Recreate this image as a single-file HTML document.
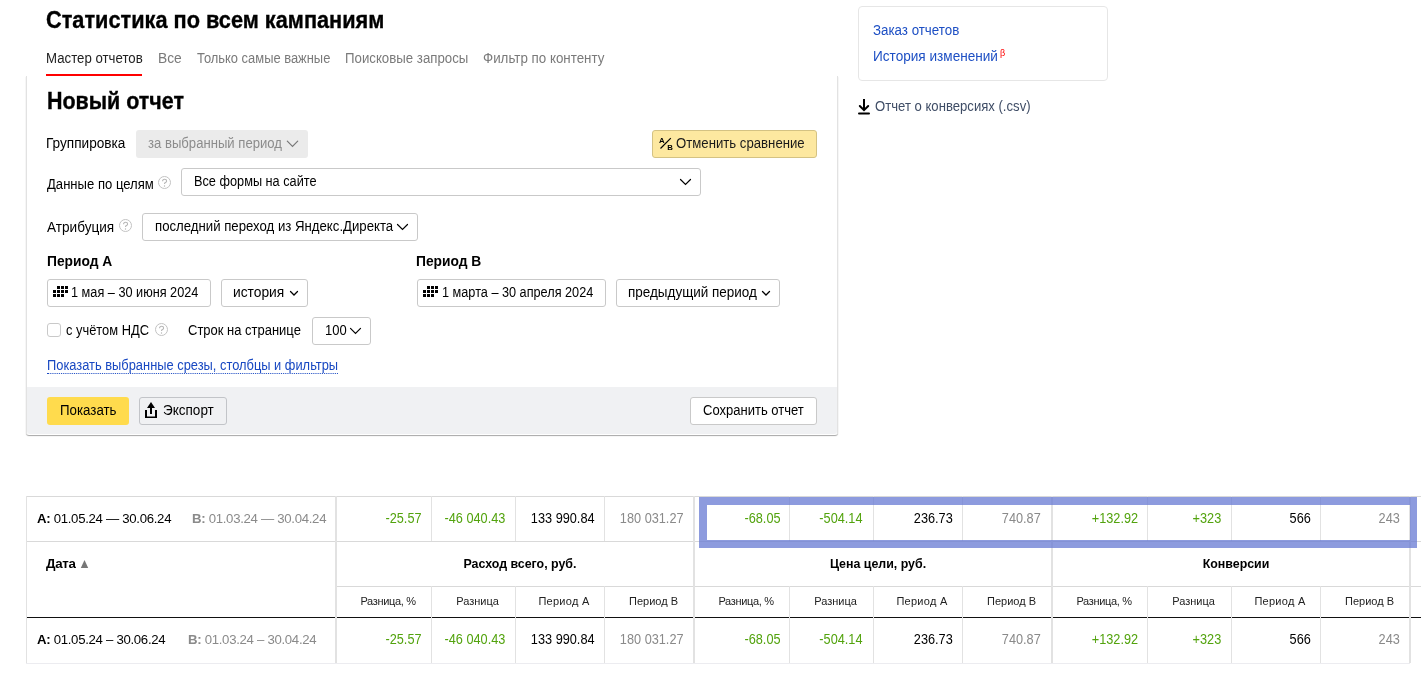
<!DOCTYPE html>
<html><head><meta charset="utf-8">
<style>
*{margin:0;padding:0;box-sizing:border-box}
html,body{width:1421px;height:687px;overflow:hidden;background:#fff}
body{font-family:"Liberation Sans",sans-serif;color:#000;font-size:13.8px;position:relative}
.a{position:absolute;white-space:nowrap}
.t{line-height:1}
.btn{position:absolute;border:1px solid #c9c9c9;border-radius:3px;background:#fff}
.q{position:absolute;width:13px;height:13px;border:1px solid #c4c4c4;border-radius:50%;color:#b0b0b0;font-size:9px;line-height:11px;text-align:center}
.chev{position:absolute}
.vl{position:absolute;width:1px;background:#e3e3e3}
.hl{position:absolute;height:1px;background:#e3e3e3}
.num{position:absolute;text-align:right;white-space:nowrap;font-size:14.3px;line-height:1;transform:scaleX(0.89);transform-origin:100% 0}
.g{color:#52a30d}
.gr{color:#8a8a8a}
.sh{position:absolute;text-align:right;white-space:nowrap;font-size:11px;line-height:1;color:#222}
</style></head><body>
<div id="wrap" style="position:absolute;left:0;top:0;width:1421px;height:687px;will-change:transform">

<!-- Title -->
<div class="a t" style="left:46px;top:9px;font-size:23.5px;font-weight:700;color:#000;transform-origin:0 0;transform:scaleX(0.925);-webkit-text-stroke:0.35px #000">Статистика по всем кампаниям</div>

<!-- Tabs -->
<div class="a t" style="left:46px;top:52px;font-size:13.8px;color:#222;transform-origin:0 0;transform:scaleX(0.9592)">Мастер отчетов</div>
<div class="a t" style="left:158px;top:52px;font-size:13.8px;color:#7a7a7a;transform-origin:0 0;transform:scaleX(1.0000)">Все</div>
<div class="a t" style="left:197px;top:52px;font-size:13.8px;color:#7a7a7a;transform-origin:0 0;transform:scaleX(0.9362)">Только самые важные</div>
<div class="a t" style="left:345px;top:52px;font-size:13.8px;color:#7a7a7a;transform-origin:0 0;transform:scaleX(0.9604)">Поисковые запросы</div>
<div class="a t" style="left:483px;top:52px;font-size:13.8px;color:#7a7a7a;transform-origin:0 0;transform:scaleX(0.9675)">Фильтр по контенту</div>
<div class="a" style="left:46px;top:74px;width:96px;height:2px;background:#f00"></div>

<!-- Panel -->
<div class="a" style="left:26px;top:76px;width:812px;height:359px;border-left:1px solid #e2e2e2;border-right:1px solid #e2e2e2;border-radius:0 0 3px 3px;box-shadow:0 1px 1px rgba(0,0,0,.35)"></div>
<div class="a" style="left:27px;top:387px;width:810px;height:47px;background:#f0f1f3;border-radius:0 0 3px 3px"></div>

<div class="a t" style="left:47px;top:90px;font-size:23.5px;font-weight:700;color:#000;transform-origin:0 0;transform:scaleX(0.913);-webkit-text-stroke:0.35px #000">Новый отчет</div>

<!-- Группировка -->
<div class="a t" style="left:46px;top:137px;font-size:13.8px;transform-origin:0 0;transform:scaleX(0.9873)">Группировка</div>
<div class="a" style="left:136px;top:130px;width:172px;height:28px;background:#ebebeb;border-radius:3px"></div>
<div class="a t" style="left:148px;top:137px;font-size:13.8px;color:#8c8c8c;transform-origin:0 0;transform:scaleX(0.9506)">за выбранный период</div>

<!-- Отменить сравнение -->
<div class="a" style="left:652px;top:130px;width:165px;height:28px;background:#fde8a0;border:1px solid #d4c283;border-radius:3px"></div>
<div class="a t" style="left:676px;top:137px;font-size:13.8px;color:#1a1a1a;transform-origin:0 0;transform:scaleX(0.9549)">Отменить сравнение</div>

<!-- Данные по целям -->
<div class="a t" style="left:47px;top:178px;font-size:13.8px;transform-origin:0 0;transform:scaleX(0.9482)">Данные по целям</div>
<svg class="a" style="left:158px;top:176px" width="14" height="14"><circle cx="6.5" cy="6.5" r="6" stroke="#c2c2c2" stroke-width="1" fill="none"/><path d="M4.6 5.2 Q4.6 3.2 6.6 3.2 Q8.6 3.2 8.6 4.9 Q8.6 6 7.4 6.6 Q6.5 7.1 6.5 8.1" stroke="#b5b5b5" stroke-width="1.1" fill="none"/><circle cx="6.5" cy="10" r="0.7" fill="#b5b5b5"/></svg>
<div class="btn" style="left:181px;top:168px;width:520px;height:28px"></div>
<div class="a t" style="left:194px;top:175px;font-size:13.8px;transform-origin:0 0;transform:scaleX(0.9231)">Все формы на сайте</div>

<!-- Атрибуция -->
<div class="a t" style="left:47px;top:221px;font-size:13.8px;transform-origin:0 0;transform:scaleX(0.9854)">Атрибуция</div>
<svg class="a" style="left:119px;top:219px" width="14" height="14"><circle cx="6.5" cy="6.5" r="6" stroke="#c2c2c2" stroke-width="1" fill="none"/><path d="M4.6 5.2 Q4.6 3.2 6.6 3.2 Q8.6 3.2 8.6 4.9 Q8.6 6 7.4 6.6 Q6.5 7.1 6.5 8.1" stroke="#b5b5b5" stroke-width="1.1" fill="none"/><circle cx="6.5" cy="10" r="0.7" fill="#b5b5b5"/></svg>
<div class="btn" style="left:142px;top:213px;width:276px;height:28px"></div>
<div class="a t" style="left:155px;top:220px;font-size:13.8px;transform-origin:0 0;transform:scaleX(0.9562)">последний переход из Яндекс.Директа</div>

<!-- Periods -->
<div class="a t" style="left:47px;top:255px;font-size:13.8px;font-weight:700;color:#000;transform-origin:0 0;transform:scaleX(1.0000)">Период А</div>
<div class="a t" style="left:416px;top:255px;font-size:13.8px;font-weight:700;color:#000;transform-origin:0 0;transform:scaleX(1.0000)">Период В</div>

<div class="btn" style="left:47px;top:279px;width:164px;height:28px"></div>
<div class="a t" style="left:71px;top:286px;font-size:13.8px;transform-origin:0 0;transform:scaleX(0.9205)">1 мая – 30 июня 2024</div>
<div class="btn" style="left:221px;top:279px;width:87px;height:28px"></div>
<div class="a t" style="left:233px;top:286px;font-size:13.8px;transform-origin:0 0;transform:scaleX(1.0000)">история</div>

<div class="btn" style="left:417px;top:279px;width:189px;height:28px"></div>
<div class="a t" style="left:442px;top:286px;font-size:13.8px;transform-origin:0 0;transform:scaleX(0.9198)">1 марта – 30 апреля 2024</div>
<div class="btn" style="left:616px;top:279px;width:164px;height:28px"></div>
<div class="a t" style="left:628px;top:286px;font-size:13.8px;transform-origin:0 0;transform:scaleX(0.9769)">предыдущий период</div>

<!-- НДС -->
<div class="a" style="left:47px;top:323px;width:14px;height:14px;border:1px solid #c9c9c9;border-radius:3px"></div>
<div class="a t" style="left:66px;top:324px;font-size:13.8px;transform-origin:0 0;transform:scaleX(0.9339)">с учётом НДС</div>
<svg class="a" style="left:155px;top:323px" width="14" height="14"><circle cx="6.5" cy="6.5" r="6" stroke="#c2c2c2" stroke-width="1" fill="none"/><path d="M4.6 5.2 Q4.6 3.2 6.6 3.2 Q8.6 3.2 8.6 4.9 Q8.6 6 7.4 6.6 Q6.5 7.1 6.5 8.1" stroke="#b5b5b5" stroke-width="1.1" fill="none"/><circle cx="6.5" cy="10" r="0.7" fill="#b5b5b5"/></svg>
<div class="a t" style="left:188px;top:324px;font-size:13.8px;transform-origin:0 0;transform:scaleX(0.9412)">Строк на странице</div>
<div class="btn" style="left:312px;top:317px;width:59px;height:28px"></div>
<div class="a t" style="left:325px;top:324px;font-size:13.8px;transform-origin:0 0;transform:scaleX(0.9401)">100</div>

<!-- link -->
<div class="a t" style="left:47px;top:359px;font-size:13.8px;color:#1848c2;border-bottom:1px dotted #1848c2;padding-bottom:0px;transform-origin:0 0;transform:scaleX(0.9325)">Показать выбранные срезы, столбцы и фильтры</div>

<!-- footer buttons -->
<div class="a" style="left:47px;top:397px;width:82px;height:28px;background:#ffdb4d;border-radius:3px"></div>
<div class="a t" style="left:60px;top:404px;font-size:13.8px;transform-origin:0 0;transform:scaleX(0.9643)">Показать</div>
<div class="a" style="left:139px;top:397px;width:88px;height:28px;border:1px solid #c2c4c8;border-radius:3px"></div>
<div class="a t" style="left:163px;top:404px;font-size:13.8px;transform-origin:0 0;transform:scaleX(0.9800)">Экспорт</div>
<div class="btn" style="left:690px;top:397px;width:127px;height:28px"></div>
<div class="a t" style="left:703px;top:404px;font-size:13.8px;transform-origin:0 0;transform:scaleX(0.9434)">Сохранить отчет</div>

<!-- Right box -->
<div class="a" style="left:858px;top:6px;width:250px;height:75px;border:1px solid #e6e6e6;border-radius:4px"></div>
<div class="a t" style="left:873px;top:24px;font-size:13.8px;color:#1d4fc4;transform-origin:0 0;transform:scaleX(0.9655)">Заказ отчетов</div>
<div class="a t" style="left:873px;top:50px;font-size:13.8px;color:#1d4fc4;transform-origin:0 0;transform:scaleX(0.9848)">История изменений</div>
<div class="a t" style="left:1000px;top:49px;font-size:9px;color:#f00">β</div>
<div class="a t" style="left:875px;top:100px;font-size:13.8px;color:#3f4d66;transform-origin:0 0;transform:scaleX(0.9506)">Отчет о конверсиях (.csv)</div>


<!-- ICONS -->
<svg class="a" style="left:0;top:0" width="1421" height="460" viewBox="0 0 1421 460">
 <g fill="none" stroke="#000" stroke-width="1.2" stroke-linecap="round" stroke-linejoin="miter">
  <path d="M287.3 141.2 L292.5 146.4 L297.7 141.2" stroke="#777"/>
  <path d="M680.5 179.5 L685.5 184.5 L690.5 179.5"/>
  <path d="M397.5 224.5 L402.5 229.5 L407.5 224.5"/>
  <path d="M290.5 291.5 L294 295 L297.5 291.5" stroke-width="1.25"/>
  <path d="M762.5 291.5 L766 295 L769.5 291.5" stroke-width="1.25"/>
  <path d="M350.5 328.3 L355.5 333.3 L360.5 328.3"/>
 </g>
 <g fill="#000">
  <rect x="57" y="286" width="3" height="3"/><rect x="61" y="286" width="3" height="3"/><rect x="65" y="286" width="3" height="3"/>
  <rect x="53" y="290" width="3" height="3"/><rect x="57" y="290" width="3" height="3"/><rect x="61" y="290" width="3" height="3"/><rect x="65" y="290" width="3" height="3"/>
  <rect x="53" y="294" width="3" height="3"/><rect x="57" y="294" width="3" height="3"/><rect x="61" y="294" width="3" height="3"/>
  <rect x="427" y="286" width="3" height="3"/><rect x="431" y="286" width="3" height="3"/><rect x="435" y="286" width="3" height="3"/>
  <rect x="423" y="290" width="3" height="3"/><rect x="427" y="290" width="3" height="3"/><rect x="431" y="290" width="3" height="3"/><rect x="435" y="290" width="3" height="3"/>
  <rect x="423" y="294" width="3" height="3"/><rect x="427" y="294" width="3" height="3"/><rect x="431" y="294" width="3" height="3"/>
 </g>
 <!-- A/B -->
 <text x="659" y="142.6" font-family="Liberation Sans" font-weight="700" font-size="7.8" fill="#000">A</text>
 <text x="667.2" y="149.7" font-family="Liberation Sans" font-weight="700" font-size="7.8" fill="#000">В</text>
 <path d="M660.5 148.5 L670.8 138.2" stroke="#000" stroke-width="1.2" fill="none"/>
 <!-- export -->
 <rect x="145" y="410" width="2" height="8" fill="#000"/><rect x="155" y="410" width="2" height="8" fill="#000"/><rect x="145" y="416.5" width="12" height="1.5" fill="#000"/>
 <path d="M147 408 L151 402 L155 408 Z" fill="#000"/>
 <rect x="150" y="407" width="2" height="7" fill="#000"/>
 <!-- download -->
 <path d="M864 99 V110" stroke="#000" stroke-width="2" fill="none"/>
 <path d="M859.8 106 L864 110.2 L868.2 106" stroke="#000" stroke-width="2" fill="none" stroke-linecap="round"/>
 <path d="M859 113.5 H869" stroke="#000" stroke-width="2" stroke-linecap="round"/>
</svg>
<!-- TABLE -->
<div class="a" style="left:26px;top:496px;width:1395px;height:1px;background:#d9d9d9"></div>
<div class="a" style="left:26px;top:541px;width:1395px;height:1px;background:#d9d9d9"></div>
<div class="a" style="left:336px;top:586px;width:1085px;height:1px;background:#d9d9d9"></div>
<div class="a" style="left:26px;top:617px;width:1395px;height:1px;background:#111"></div>
<div class="a" style="left:26px;top:663px;width:1384px;height:1px;background:#ececf0"></div>
<div class="a" style="left:26px;top:496px;width:1px;height:167px;background:#e2e2e2"></div>
<div class="a" style="left:335px;top:496px;width:2px;height:167px;background:#e2e2e2"></div>
<div class="a" style="left:431px;top:496px;width:1px;height:45px;background:#e2e2e2"></div>
<div class="a" style="left:431px;top:586px;width:1px;height:77px;background:#e2e2e2"></div>
<div class="a" style="left:515px;top:496px;width:1px;height:45px;background:#e2e2e2"></div>
<div class="a" style="left:515px;top:586px;width:1px;height:77px;background:#e2e2e2"></div>
<div class="a" style="left:604px;top:496px;width:1px;height:45px;background:#e2e2e2"></div>
<div class="a" style="left:604px;top:586px;width:1px;height:77px;background:#e2e2e2"></div>
<div class="a" style="left:693px;top:496px;width:2px;height:167px;background:#e2e2e2"></div>
<div class="a" style="left:789px;top:496px;width:1px;height:45px;background:#e2e2e2"></div>
<div class="a" style="left:789px;top:586px;width:1px;height:77px;background:#e2e2e2"></div>
<div class="a" style="left:873px;top:496px;width:1px;height:45px;background:#e2e2e2"></div>
<div class="a" style="left:873px;top:586px;width:1px;height:77px;background:#e2e2e2"></div>
<div class="a" style="left:962px;top:496px;width:1px;height:45px;background:#e2e2e2"></div>
<div class="a" style="left:962px;top:586px;width:1px;height:77px;background:#e2e2e2"></div>
<div class="a" style="left:1051px;top:496px;width:2px;height:167px;background:#e2e2e2"></div>
<div class="a" style="left:1147px;top:496px;width:1px;height:45px;background:#e2e2e2"></div>
<div class="a" style="left:1147px;top:586px;width:1px;height:77px;background:#e2e2e2"></div>
<div class="a" style="left:1231px;top:496px;width:1px;height:45px;background:#e2e2e2"></div>
<div class="a" style="left:1231px;top:586px;width:1px;height:77px;background:#e2e2e2"></div>
<div class="a" style="left:1320px;top:496px;width:1px;height:45px;background:#e2e2e2"></div>
<div class="a" style="left:1320px;top:586px;width:1px;height:77px;background:#e2e2e2"></div>
<div class="a" style="left:1409px;top:496px;width:2px;height:167px;background:#e2e2e2"></div>
<div class="num g" style="right:999px;top:511px">-25.57</div>
<div class="num g" style="right:999px;top:632px">-25.57</div>
<div class="num g" style="right:916px;top:511px">-46 040.43</div>
<div class="num g" style="right:916px;top:632px">-46 040.43</div>
<div class="num " style="right:826px;top:511px">133 990.84</div>
<div class="num " style="right:826px;top:632px">133 990.84</div>
<div class="num gr" style="right:737px;top:511px">180 031.27</div>
<div class="num gr" style="right:737px;top:632px">180 031.27</div>
<div class="num g" style="right:640px;top:511px">-68.05</div>
<div class="num g" style="right:640px;top:632px">-68.05</div>
<div class="num g" style="right:559px;top:511px">-504.14</div>
<div class="num g" style="right:559px;top:632px">-504.14</div>
<div class="num " style="right:468px;top:511px">236.73</div>
<div class="num " style="right:468px;top:632px">236.73</div>
<div class="num gr" style="right:380px;top:511px">740.87</div>
<div class="num gr" style="right:380px;top:632px">740.87</div>
<div class="num g" style="right:283px;top:511px">+132.92</div>
<div class="num g" style="right:283px;top:632px">+132.92</div>
<div class="num g" style="right:200px;top:511px">+323</div>
<div class="num g" style="right:200px;top:632px">+323</div>
<div class="num " style="right:110px;top:511px">566</div>
<div class="num " style="right:110px;top:632px">566</div>
<div class="num gr" style="right:21px;top:511px">243</div>
<div class="num gr" style="right:21px;top:632px">243</div>
<div class="sh" style="left:328.0px;width:120px;text-align:center;top:596px;letter-spacing:-0.33px">Разница, %</div>
<div class="sh" style="left:417.5px;width:120px;text-align:center;top:596px;letter-spacing:0px">Разница</div>
<div class="sh" style="left:504.0px;width:120px;text-align:center;top:596px;letter-spacing:0.28px">Период А</div>
<div class="sh" style="left:593.5px;width:120px;text-align:center;top:596px;letter-spacing:0px">Период В</div>
<div class="sh" style="left:686.0px;width:120px;text-align:center;top:596px;letter-spacing:-0.33px">Разница, %</div>
<div class="sh" style="left:775.5px;width:120px;text-align:center;top:596px;letter-spacing:0px">Разница</div>
<div class="sh" style="left:862.0px;width:120px;text-align:center;top:596px;letter-spacing:0.28px">Период А</div>
<div class="sh" style="left:951.5px;width:120px;text-align:center;top:596px;letter-spacing:0px">Период В</div>
<div class="sh" style="left:1044.0px;width:120px;text-align:center;top:596px;letter-spacing:-0.33px">Разница, %</div>
<div class="sh" style="left:1133.5px;width:120px;text-align:center;top:596px;letter-spacing:0px">Разница</div>
<div class="sh" style="left:1220.0px;width:120px;text-align:center;top:596px;letter-spacing:0.28px">Период А</div>
<div class="sh" style="left:1309.5px;width:120px;text-align:center;top:596px;letter-spacing:0px">Период В</div>
<div class="a t" style="left:420.0px;width:200px;text-align:center;top:558px;font-size:12.4px;font-weight:700;color:#000">Расход всего, руб.</div>
<div class="a t" style="left:778.0px;width:200px;text-align:center;top:558px;font-size:12.4px;font-weight:700;color:#000">Цена цели, руб.</div>
<div class="a t" style="left:1136.0px;width:200px;text-align:center;top:558px;font-size:12.4px;font-weight:700;color:#000">Конверсии</div>
<div class="a t" style="left:37px;top:512px;font-size:13.2px;letter-spacing:-0.3px"><b>A:</b> 01.05.24 — 30.06.24</div>
<div class="a t gr" style="left:192px;top:512px;font-size:13.2px;letter-spacing:-0.3px"><b>B:</b> 01.03.24 — 30.04.24</div>
<div class="a t" style="left:46px;top:557px;font-size:13.3px;font-weight:700;color:#000;letter-spacing:-0.3px">Дата</div>
<svg class="a" style="left:80px;top:559px" width="10" height="10"><path d="M0.8 9 L4.5 1 L8.2 9 Z" fill="#777"/></svg>
<div class="a t" style="left:37px;top:633px;font-size:13.2px;letter-spacing:-0.3px"><b>A:</b> 01.05.24 – 30.06.24</div>
<div class="a t gr" style="left:188px;top:633px;font-size:13.2px;letter-spacing:-0.3px"><b>B:</b> 01.03.24 – 30.04.24</div>
<div class="a" style="left:699px;top:497px;width:718px;height:51px;border:8px solid rgba(105,124,212,.76);border-right-width:7px;border-bottom-width:8px"></div>
</div>
</body></html>
